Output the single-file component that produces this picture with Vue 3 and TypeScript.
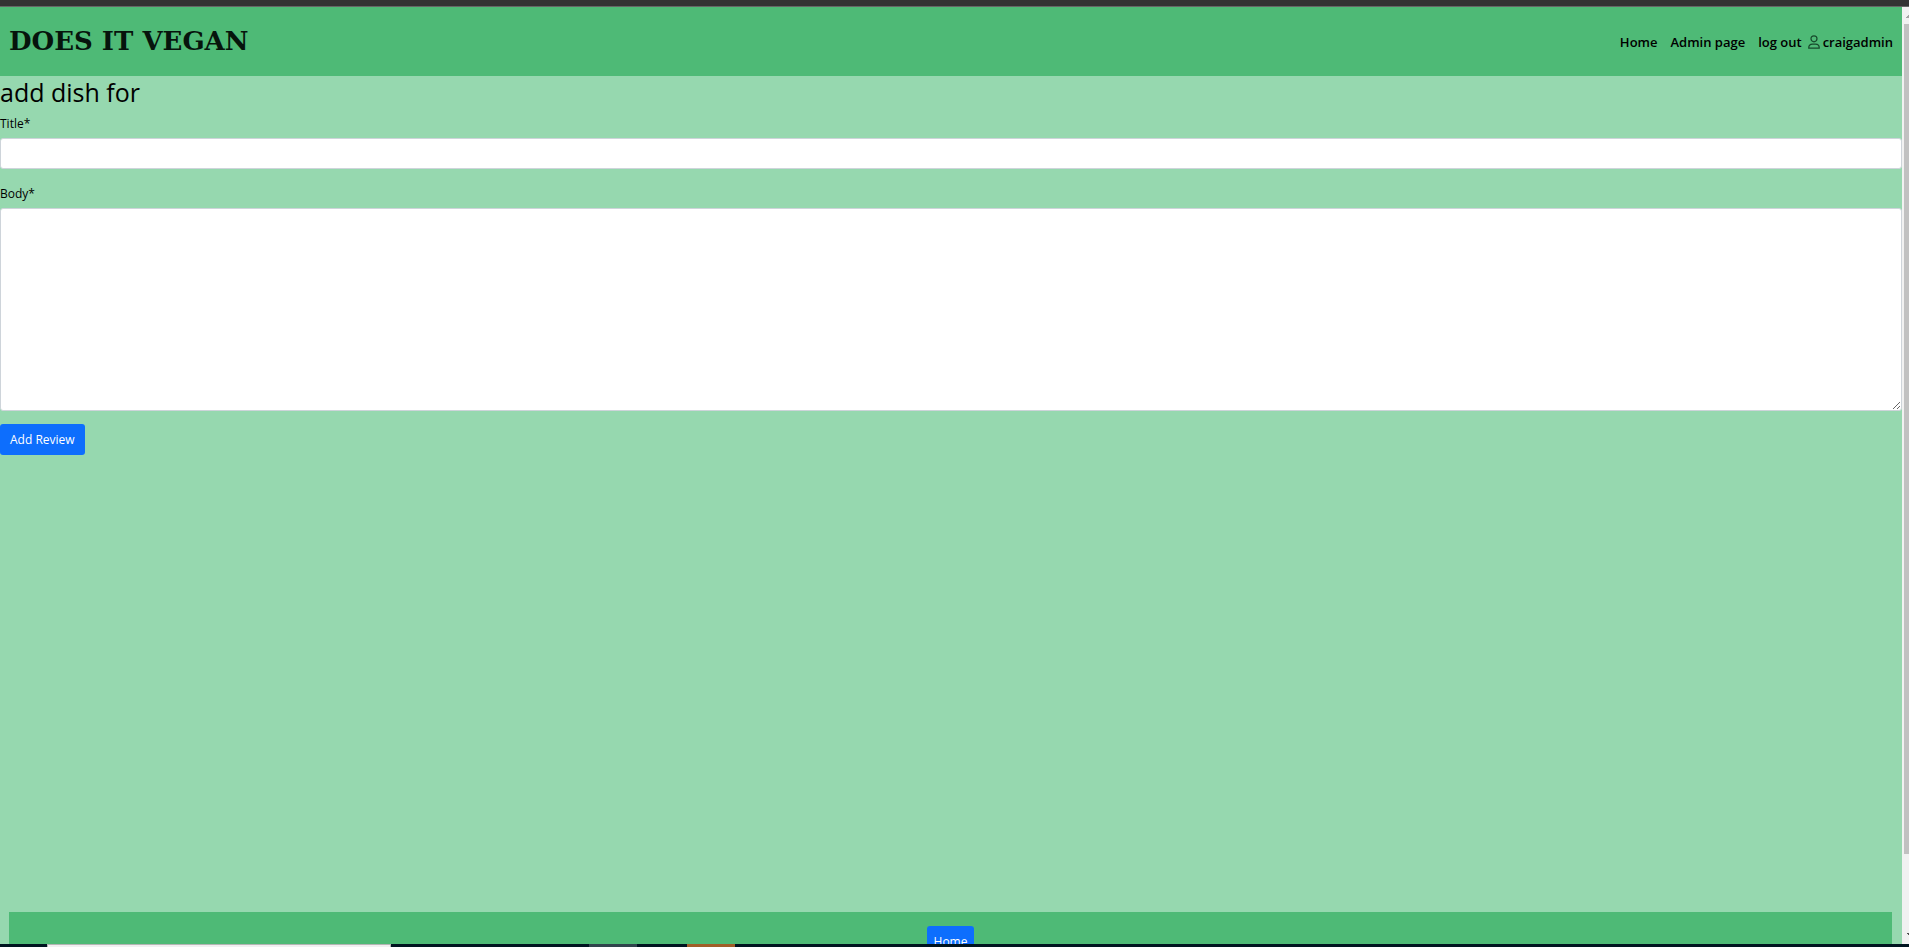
<script setup lang="ts">
import { ref } from 'vue'

const title = ref('')
const body = ref('')
const links = ['Home', 'Admin page', 'log out']
</script>

<template>
  <div class="screen">
    <div class="chrome-bar"></div>
    <div class="window">
      <div class="page">
        <header class="navbar">
          <a class="brand" href="#">DOES IT VEGAN</a>
          <nav class="nav">
            <a v-for="link in links" :key="link" class="nav-link" href="#">{{ link }}</a>
            <span class="user">
              <svg class="user-icon" viewBox="0 0 12 14" fill="none" stroke="#174a2c" stroke-width="1.2" aria-hidden="true">
                <circle cx="6" cy="3.800" r="3" />
                <path d="M.7 13.200C.7 10.400 2.300 9.200 4.500 9.200h3c2.200 0 3.800 1.200 3.800 4z" stroke-linejoin="round" />
              </svg>
              craigadmin
            </span>
          </nav>
        </header>
        <main class="content">
          <h1 class="heading">add dish for</h1>
          <form @submit.prevent>
            <div class="field">
              <label for="title">Title*</label>
              <input id="title" v-model="title" type="text" class="control" />
            </div>
            <div class="field">
              <label for="body">Body*</label>
              <textarea id="body" v-model="body" class="control area"></textarea>
            </div>
            <button type="submit" class="button">Add Review</button>
          </form>
        </main>
        <footer class="footer">
          <a class="button home" href="#">Home</a>
        </footer>
      </div>
      <div class="scrollbar" aria-hidden="true">
        <svg class="arrow" viewBox="0 0 7 17"><path d="M4 10h1V9h1V8h1v3H4z" fill="#a3a3a3" /></svg>
        <div class="thumb"></div>
        <svg class="arrow" viewBox="0 0 7 17"><path d="M5 6h2v2H6V7H5z" fill="#505050" /></svg>
      </div>
    </div>
    <div class="taskbar" aria-hidden="true">
      <div class="search"></div>
      <div class="task"></div>
      <div class="task alert"></div>
    </div>
  </div>
</template>

<style>
body {
  margin: 0;
}
</style>

<style scoped>
* {
  box-sizing: border-box;
}
.screen {
  display: flex;
  flex-direction: column;
  height: 100vh;
  overflow: hidden;
  font-family: "Open Sans", "Noto Sans", sans-serif;
  font-size: 12px;
  color: #000;
}
.chrome-bar {
  flex: 0 0 7px;
  background: #333;
  border-bottom: 1px solid #666;
}
.window {
  flex: 1;
  min-height: 0;
  display: flex;
  overflow: hidden;
  background: #96d8af;
}
.page {
  flex: 1;
  min-width: 0;
  min-height: calc(100% + 29px);
  display: flex;
  flex-direction: column;
}
.navbar {
  display: flex;
  align-items: center;
  justify-content: space-between;
  height: 69px;
  padding: 0 9px;
  background: #4eba76;
}
.brand {
  padding-bottom: 2px;
  font-family: "DejaVu Serif", serif;
  font-size: 26px;
  font-weight: 700;
  color: #06140c;
  text-decoration: none;
}
.nav {
  display: flex;
  font-size: 13px;
  font-weight: 600;
}
.nav-link {
  margin-right: 13px;
  color: #000;
  text-decoration: none;
}
.nav-link:last-of-type {
  margin-right: 6px;
}
.user {
  display: flex;
  align-items: center;
  gap: 3px;
}
.user-icon {
  width: 12px;
  height: 14px;
}
.content {
  flex: 1;
}
.heading {
  margin: 0 0 7px;
  font-size: 25px;
  line-height: 32px;
  font-weight: 500;
}
.field {
  display: flex;
  flex-direction: column;
  margin-bottom: 16px;
}
.field:last-of-type {
  margin-bottom: 13px;
}
label {
  margin-bottom: 5px;
  line-height: 18px;
}
.control {
  width: 100%;
  height: 31px;
  margin: 0;
  padding: 4px 10px;
  border: 1px solid #ced4da;
  border-radius: 3px;
  background: #fff;
  font: inherit;
  outline: none;
}
.area {
  height: 203px;
  resize: vertical;
}
.button {
  display: block;
  height: 31px;
  padding: 0 10px;
  border: 0;
  border-radius: 3px;
  background: #0d6efd;
  color: #fff;
  font: inherit;
  line-height: 31px;
  text-decoration: none;
}
.footer {
  display: flex;
  justify-content: center;
  margin: 0 10px 0 9px;
  padding: 14px 0 16px;
  background: #4eba76;
}
.home {
  padding: 0 7px;
}
.scrollbar {
  flex: 0 0 7px;
  display: flex;
  flex-direction: column;
  background: #f1f1f1;
}
.arrow {
  flex: 0 0 17px;
  width: 7px;
}
.thumb {
  flex: 0 0 830px;
  margin: 0 0 auto 2px;
  background: #c1c1c1;
}
.taskbar {
  flex: 0 0 3px;
  display: flex;
  background: #001420;
}
.search {
  width: 344px;
  margin: 0 198px 0 47px;
  background: #f1f0f1;
  border: 1px solid #b5b5b5;
  border-bottom: 0;
}
.task {
  width: 48px;
  margin-right: 50px;
  background: #30444c;
}
.alert {
  background: #a05e28;
}
</style>
